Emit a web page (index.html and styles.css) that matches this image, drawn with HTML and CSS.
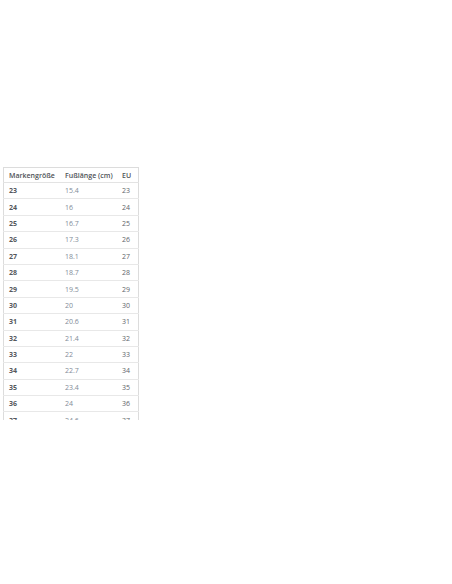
FILE: index.html
```html
<!DOCTYPE html>
<html lang="de">
<head>
<meta charset="utf-8">
<link rel="stylesheet" href="styles.css">
</head>
<body>
<div class="page">
  <div class="clip">
    <table class="sizes">
      <thead>
        <tr><th class="c1">Markengröße</th><th class="c2">Fußlänge (cm)</th><th class="c3">EU</th></tr>
      </thead>
      <tbody>
        <tr><td class="c1">23</td><td class="c2">15.4</td><td class="c3">23</td></tr>
        <tr><td class="c1">24</td><td class="c2">16</td><td class="c3">24</td></tr>
        <tr><td class="c1">25</td><td class="c2">16.7</td><td class="c3">25</td></tr>
        <tr><td class="c1">26</td><td class="c2">17.3</td><td class="c3">26</td></tr>
        <tr><td class="c1">27</td><td class="c2">18.1</td><td class="c3">27</td></tr>
        <tr><td class="c1">28</td><td class="c2">18.7</td><td class="c3">28</td></tr>
        <tr><td class="c1">29</td><td class="c2">19.5</td><td class="c3">29</td></tr>
        <tr><td class="c1">30</td><td class="c2">20</td><td class="c3">30</td></tr>
        <tr><td class="c1">31</td><td class="c2">20.6</td><td class="c3">31</td></tr>
        <tr><td class="c1">32</td><td class="c2">21.4</td><td class="c3">32</td></tr>
        <tr><td class="c1">33</td><td class="c2">22</td><td class="c3">33</td></tr>
        <tr><td class="c1">34</td><td class="c2">22.7</td><td class="c3">34</td></tr>
        <tr><td class="c1">35</td><td class="c2">23.4</td><td class="c3">35</td></tr>
        <tr><td class="c1">36</td><td class="c2">24</td><td class="c3">36</td></tr>
        <tr><td class="c1">37</td><td class="c2">24.6</td><td class="c3">37</td></tr>
      </tbody>
    </table>
  </div>
</div>
</body>
</html>
```
FILE: styles.css
```css
html, body {
  margin: 0;
  padding: 0;
  background: #ffffff;
}
.page {
  padding: 167px 0 0 3px;
  font-family: "Open Sans", "Liberation Sans", sans-serif;
}
.clip {
  width: 140px;
  height: 253px;
  overflow: hidden;
}
.sizes {
  border-collapse: collapse;
  width: 134px;
  table-layout: fixed;
  border: 1px solid #dcdcdc;
  font-size: 7px;
  line-height: 9px;
}
.sizes th {
  height: 14px;
  padding: 0;
  text-align: left;
  font-weight: 600;
  color: #4f5257;
  border-bottom: 1px solid #e3e3e3;
}
.sizes td {
  height: 15.4px;
  padding: 0;
  border-bottom: 1px solid #e8e8e8;
}
.sizes .c1 { width: 55px; padding-left: 5px; }
.sizes .c2 { width: 57px; padding-left: 1px; }
.sizes .c3 { width: 16px; padding-left: 0; }
.sizes td.c1 { font-weight: 700; color: #55585c; }
.sizes td.c2 { color: #828c98; }
.sizes td.c3 { color: #62656a; }
```
